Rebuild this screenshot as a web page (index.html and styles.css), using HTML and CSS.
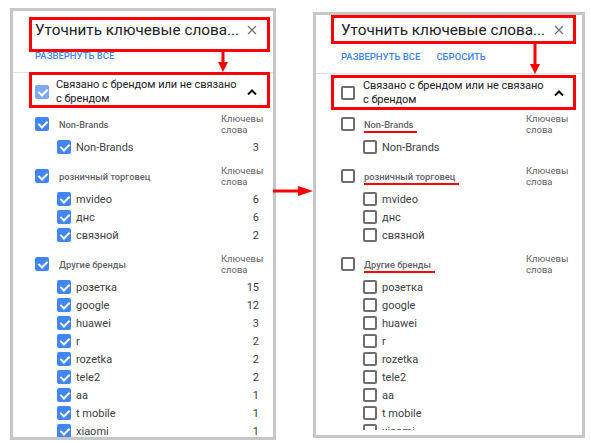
FILE: index.html
```html
<!DOCTYPE html>
<html lang="ru">
<head>
  <meta charset="UTF-8">
  <meta name="viewport" content="width=device-width, initial-scale=1.0">
  <title>Уточнить ключевые слова</title>
  <link rel="stylesheet" href="styles.css">
</head>
<body>
  <main class="compare">

    <!-- before: everything checked -->
    <section class="panel panel--before">
      <header class="panel-title mark">
        <h2>Уточнить ключевые слова...</h2>
        <svg class="icon-close" viewBox="0 0 10 10"><path d="M1 1L9 9M9 1L1 9"/></svg>
      </header>
      <div class="panel-actions">
        <a href="#">Развернуть все</a>
      </div>
      <div class="facet-head mark">
        <span class="box box--soft is-checked"></span>
        <span class="facet-name">Связано с брендом или не связано<br>с брендом</span>
        <svg class="icon-chevron" viewBox="0 0 10 6"><path d="M1 5.5L5 1.5L9 5.5"/></svg>
      </div>
      <svg class="arrow-down" viewBox="0 0 10 20"><rect x="3.5" y="0" width="3" height="11"/><polygon points="0,10 10,10 5,20"/></svg>

      <div class="groups">
        <div class="group">
          <div class="group-head">
            <span class="box is-checked"></span>
            <span class="group-name">Non-Brands</span>
            <span class="group-col">Ключевы слова</span>
          </div>
          <ul class="group-items">
            <li><span class="box is-checked"></span><span class="item-name">Non-Brands</span><span class="item-val">3</span></li>
          </ul>
        </div>
        <div class="group">
          <div class="group-head">
            <span class="box is-checked"></span>
            <span class="group-name">розничный торговец</span>
            <span class="group-col">Ключевы слова</span>
          </div>
          <ul class="group-items">
            <li><span class="box is-checked"></span><span class="item-name">mvideo</span><span class="item-val">6</span></li>
            <li><span class="box is-checked"></span><span class="item-name">днс</span><span class="item-val">6</span></li>
            <li><span class="box is-checked"></span><span class="item-name">связной</span><span class="item-val">2</span></li>
          </ul>
        </div>
        <div class="group">
          <div class="group-head">
            <span class="box is-checked"></span>
            <span class="group-name">Другие бренды</span>
            <span class="group-col">Ключевы слова</span>
          </div>
          <ul class="group-items">
            <li><span class="box is-checked"></span><span class="item-name">розетка</span><span class="item-val">15</span></li>
            <li><span class="box is-checked"></span><span class="item-name">google</span><span class="item-val">12</span></li>
            <li><span class="box is-checked"></span><span class="item-name">huawei</span><span class="item-val">3</span></li>
            <li><span class="box is-checked"></span><span class="item-name">r</span><span class="item-val">2</span></li>
            <li><span class="box is-checked"></span><span class="item-name">rozetka</span><span class="item-val">2</span></li>
            <li><span class="box is-checked"></span><span class="item-name">tele2</span><span class="item-val">2</span></li>
            <li><span class="box is-checked"></span><span class="item-name">aa</span><span class="item-val">1</span></li>
            <li><span class="box is-checked"></span><span class="item-name">t mobile</span><span class="item-val">1</span></li>
            <li><span class="box is-checked"></span><span class="item-name">xiaomi</span><span class="item-val">1</span></li>
          </ul>
        </div>
      </div>
    </section>

    <div class="arrow-right">
      <svg viewBox="0 0 40 10"><rect x="0" y="3.5" width="27" height="3"/><polygon points="25,0 40,5 25,10"/></svg>
    </div>

    <!-- after: reset, nothing checked -->
    <section class="panel panel--after">
      <header class="panel-title mark">
        <h2>Уточнить ключевые слова...</h2>
        <svg class="icon-close" viewBox="0 0 10 10"><path d="M1 1L9 9M9 1L1 9"/></svg>
      </header>
      <div class="panel-actions">
        <a href="#">Развернуть все</a>
        <a href="#">Сбросить</a>
      </div>
      <div class="facet-head mark">
        <span class="box"></span>
        <span class="facet-name">Связано с брендом или не связано<br>с брендом</span>
        <svg class="icon-chevron" viewBox="0 0 10 6"><path d="M1 5.5L5 1.5L9 5.5"/></svg>
      </div>
      <svg class="arrow-down" viewBox="0 0 10 30"><rect x="3.5" y="0" width="3" height="21"/><polygon points="0,20 10,20 5,30"/></svg>

      <div class="groups">
        <div class="group">
          <div class="group-head">
            <span class="box"></span>
            <span class="group-name"><span class="underline">Non-Brands</span></span>
            <span class="group-col">Ключевы слова</span>
          </div>
          <ul class="group-items">
            <li><span class="box"></span><span class="item-name">Non-Brands</span></li>
          </ul>
        </div>
        <div class="group">
          <div class="group-head">
            <span class="box"></span>
            <span class="group-name"><span class="underline">розничный торговец</span></span>
            <span class="group-col">Ключевы слова</span>
          </div>
          <ul class="group-items">
            <li><span class="box"></span><span class="item-name">mvideo</span></li>
            <li><span class="box"></span><span class="item-name">днс</span></li>
            <li><span class="box"></span><span class="item-name">связной</span></li>
          </ul>
        </div>
        <div class="group">
          <div class="group-head">
            <span class="box"></span>
            <span class="group-name"><span class="underline">Другие бренды</span></span>
            <span class="group-col">Ключевы слова</span>
          </div>
          <ul class="group-items">
            <li><span class="box"></span><span class="item-name">розетка</span></li>
            <li><span class="box"></span><span class="item-name">google</span></li>
            <li><span class="box"></span><span class="item-name">huawei</span></li>
            <li><span class="box"></span><span class="item-name">r</span></li>
            <li><span class="box"></span><span class="item-name">rozetka</span></li>
            <li><span class="box"></span><span class="item-name">tele2</span></li>
            <li><span class="box"></span><span class="item-name">aa</span></li>
            <li><span class="box"></span><span class="item-name">t mobile</span></li>
            <li><span class="box"></span><span class="item-name">xiaomi</span></li>
          </ul>
        </div>
      </div>
    </section>

  </main>
</body>
</html>
```

FILE: styles.css
```css
* {
  box-sizing: border-box;
}

body {
  margin: 0;
  background-color: #ffffff;
  font-family: Roboto, "Noto Sans", Arial, sans-serif;
  color: #202124;
}

.compare {
  display: flex;
  align-items: flex-start;
  padding: 8px 0 0 10px;
}

/* panels */

.panel {
  position: relative;
  display: flex;
  flex-direction: column;
  border: 3px solid #c6c6c6;
  background-color: #ffffff;
  overflow: hidden;
  --pad-l: 22px;
  --pad-r: 16px;
}

.panel--before {
  width: 266px;
  height: 432px;
}

.panel--after {
  width: 272px;
  height: 426px;
  margin-top: 4px;
  padding-bottom: 5px;
  --pad-l: 25px;
  --pad-r: 18px;
}

.panel-title {
  display: flex;
  align-items: center;
  height: 20px;
  margin-top: 9px;
  padding: 0 var(--pad-r) 0 var(--pad-l);
}

.panel--after .panel-title {
  margin-top: 5px;
}

.panel-title h2 {
  flex: 1;
  margin: 0;
  font-size: 15.3px;
  font-weight: 400;
  line-height: 20px;
  color: #202124;
  white-space: nowrap;
}

.icon-close {
  width: 10px;
  height: 10px;
  fill: none;
  stroke: #757575;
  stroke-width: 1.3;
}

.panel-actions {
  display: flex;
  gap: 16px;
  height: 12px;
  margin-top: 10px;
  padding-left: var(--pad-l);
}

.panel--after .panel-actions {
  margin-top: 11px;
}

.panel-actions a {
  font-size: 9.5px;
  font-weight: 500;
  line-height: 12px;
  color: #4285f4;
  text-transform: uppercase;
  text-decoration: none;
}

.facet-head {
  display: flex;
  align-items: center;
  margin-top: 10px;
  padding: 5px var(--pad-r) 2px var(--pad-l);
  border-top: 1px solid #e3e3e3;
}

.facet-name {
  flex: 1;
  margin-left: 7px;
  font-size: 11px;
  letter-spacing: -0.05px;
  line-height: 14px;
  color: #202124;
  white-space: nowrap;
}

.panel--after .facet-name {
  margin-left: 8px;
}

.icon-chevron {
  width: 10px;
  height: 6px;
  margin-left: 4px;
  fill: none;
  stroke: #111111;
  stroke-width: 2;
}

/* annotation marks drawn over the screenshot */

.mark {
  position: relative;
}

.mark::after {
  content: "";
  position: absolute;
  border: 3px solid #ff0000;
  pointer-events: none;
}

.panel--before .panel-title::after {
  top: -3px;
  bottom: -12px;
  left: 16px;
  right: 3px;
}

.panel--after .panel-title::after {
  top: -5px;
  bottom: -4px;
  left: 15px;
  right: 6px;
}

.panel--before .facet-head::after {
  top: -1px;
  bottom: 0;
  left: 16px;
  right: 3px;
}

.panel--after .facet-head::after {
  top: 1px;
  bottom: -1px;
  left: 15px;
  right: 6px;
}

.arrow-down {
  position: absolute;
  width: 10px;
  fill: #ff0000;
}

.panel--before .arrow-down {
  left: 205px;
  top: 41px;
  height: 20px;
}

.panel--after .arrow-down {
  left: 214px;
  top: 29px;
  height: 30px;
}

.underline {
  padding: 0 4px 1px 0;
  margin-left: -1px;
  border-bottom: 2px solid #ff0000;
}

.arrow-right {
  margin: 178px 0 0 -3px;
  width: 40px;
  height: 10px;
  z-index: 1;
}

.arrow-right svg {
  display: block;
  width: 40px;
  height: 10px;
  fill: #ff0000;
}

/* checkboxes */

.box {
  position: relative;
  flex: none;
  width: 14px;
  height: 14px;
  border: 2px solid #6e6e6e;
  border-radius: 2px;
}

.box.is-checked {
  border-color: #4285f4;
  background-color: #4285f4;
}

.box--soft.is-checked {
  border-color: #7ea8f6;
  background-color: #7ea8f6;
}

.box.is-checked::after {
  content: "";
  position: absolute;
  left: 3px;
  top: 0;
  width: 4px;
  height: 7px;
  border-right: 2px solid #ffffff;
  border-bottom: 2px solid #ffffff;
  transform: rotate(45deg);
}

/* groups */

.groups {
  flex: 1;
  min-height: 0;
  overflow: hidden;
  padding: 5px calc(var(--pad-r) - 4px) 0 var(--pad-l);
}

.panel--after .groups {
  padding-top: 4px;
}

.group {
  margin-bottom: 9px;
}

.group-head {
  display: flex;
  align-items: center;
  height: 22px;
}

.group-name {
  flex: 1;
  margin-left: 10px;
  font-size: 9.3px;
  font-weight: 500;
  color: #5f6368;
}

.group-col {
  width: 40px;
  font-size: 9.5px;
  line-height: 11px;
  color: #5f6368;
}

.panel--after .group-col {
  width: 40px;
  margin-right: 2px;
}

.group-items {
  list-style: none;
  margin: 3px 0 0;
  padding: 0 0 0 22px;
}

.group-items li {
  display: flex;
  align-items: center;
  height: 18px;
}

.item-name {
  flex: 1;
  margin-left: 5px;
  font-size: 11px;
  color: #3c4043;
}

.item-val {
  padding-right: 2px;
  font-size: 11px;
  color: #3c4043;
}
```
